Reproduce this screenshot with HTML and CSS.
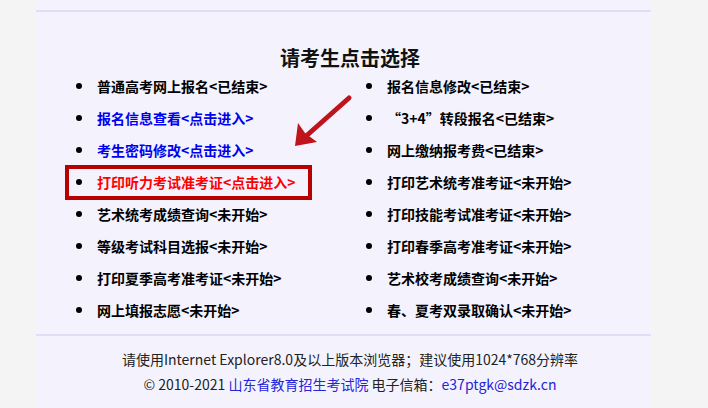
FILE: index.html
```html
<!DOCTYPE html>
<html lang="zh-CN">
<head>
<meta charset="utf-8">
<title>请考生点击选择</title>
<link rel="stylesheet" href="styles.css">
</head>
<body>
<div class="panel">
  <div class="rule top"></div>
  <div class="content">
    <h2 class="title">请考生点击选择</h2>
    <ul class="list">
      <li>普通高考网上报名&lt;已结束&gt;</li>
      <li><a class="link" href="#">报名信息查看&lt;点击进入&gt;</a></li>
      <li><a class="link" href="#">考生密码修改&lt;点击进入&gt;</a></li>
      <li class="hot"><a class="link red" href="#">打印听力考试准考证&lt;点击进入&gt;</a></li>
      <li>艺术统考成绩查询&lt;未开始&gt;</li>
      <li>等级考试科目选报&lt;未开始&gt;</li>
      <li>打印夏季高考准考证&lt;未开始&gt;</li>
      <li>网上填报志愿&lt;未开始&gt;</li>
      <li>报名信息修改&lt;已结束&gt;</li>
      <li>“3+4”转段报名&lt;已结束&gt;</li>
      <li>网上缴纳报考费&lt;已结束&gt;</li>
      <li>打印艺术统考准考证&lt;未开始&gt;</li>
      <li>打印技能考试准考证&lt;未开始&gt;</li>
      <li>打印春季高考准考证&lt;未开始&gt;</li>
      <li>艺术校考成绩查询&lt;未开始&gt;</li>
      <li>春、夏考双录取确认&lt;未开始&gt;</li>
    </ul>
  </div>
  <div class="rule bottom"></div>
  <div class="footer">
    <p>请使用Internet Explorer8.0及以上版本浏览器；建议使用1024*768分辨率</p>
    <p>© 2010-2021 <a class="flink" href="#">山东省教育招生考试院</a> 电子信箱：<a class="flink" href="#">e37ptgk@sdzk.cn</a></p>
  </div>
  <svg class="arrow" width="80" height="70" viewBox="0 0 80 70" aria-hidden="true">
    <line x1="71" y1="19" x2="27" y2="58" stroke="#c0141c" stroke-width="5" stroke-linecap="round"/>
    <polygon points="17,67 20,44 27,54 39,63" fill="#c0141c"/>
  </svg>
</div>
</body>
</html>
```

FILE: styles.css
```css
html, body {
  margin: 0;
  padding: 0;
}
body {
  background: #f4f4f4;
  font-family: "Noto Sans CJK SC", "Microsoft YaHei", sans-serif;
  color: #000;
}
.panel {
  position: relative;
  margin-left: 36px;
  width: 615px;
  height: 408px;
  background: #f4f3fd;
  padding-top: 10px;
  box-sizing: border-box;
}
.rule {
  height: 2px;
  background: #e0def7;
}
.content {
  padding-left: 13px;
}
.title {
  margin: 0;
  padding-top: 33px;
  height: 25px;
  line-height: 25px;
  font-size: 20px;
  font-weight: bold;
  text-align: center;
  color: #111;
}
.list {
  list-style: none;
  margin: 0;
  padding: 0 0 0 27px;
  display: grid;
  grid-template-columns: 290px 288px;
  grid-template-rows: repeat(8, 32px);
  grid-auto-flow: column;
}
.list li {
  position: relative;
  display: flex;
  align-items: center;
  font-size: 14px;
  font-weight: bold;
  white-space: nowrap;
}
.list li::before {
  content: "";
  width: 6px;
  height: 6px;
  border-radius: 50%;
  background: #000;
  margin-right: 15px;
  flex: none;
}
.link {
  color: #0000f0;
  text-decoration: none;
}
.link.red {
  color: #ff0000;
}
.list li.hot::after {
  content: "";
  position: absolute;
  left: -11px;
  top: -1px;
  width: 247px;
  height: 35px;
  border: 4px solid #b80000;
  box-sizing: border-box;
}
.rule.bottom {
  margin-top: 8px;
}
.footer {
  padding-left: 13px;
  padding-top: 11px;
  text-align: center;
  font-size: 14px;
  color: #222;
}
.footer p {
  margin: 0;
  line-height: 25px;
}
.flink {
  color: #2424d8;
  text-decoration: none;
}
.arrow {
  position: absolute;
  left: 242px;
  top: 79px;
}
```
